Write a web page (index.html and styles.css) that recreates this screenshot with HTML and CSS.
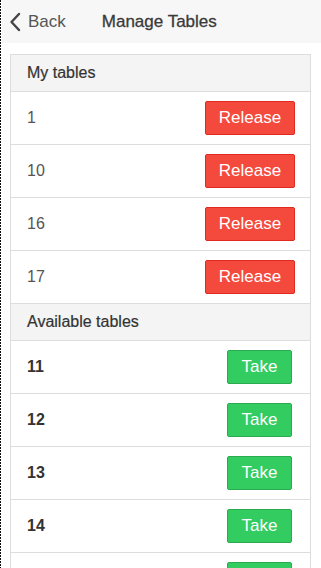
FILE: index.html
```html
<html>
<head>
  <title>Manage Tables</title>
  <link rel="stylesheet" href="styles.css">
</head>
<body>
  <div class="edge"></div>
  <header class="topbar">
    <a class="back" href="#">
      <svg class="chevron" width="12" height="20" viewBox="0 0 12 20">
        <path d="M10 2 L2.5 10 L10 18" fill="none" stroke="#444" stroke-width="2.4" stroke-linecap="round" stroke-linejoin="round"/>
      </svg>
      Back
    </a>
    <h1>Manage Tables</h1>
  </header>

  <div class="panel">
    <div class="panel-heading">My tables</div>
    <div class="row"><span class="num">1</span><button class="btn release">Release</button></div>
    <div class="row"><span class="num">10</span><button class="btn release">Release</button></div>
    <div class="row"><span class="num">16</span><button class="btn release">Release</button></div>
    <div class="row"><span class="num">17</span><button class="btn release">Release</button></div>

    <div class="panel-heading">Available tables</div>
    <div class="row"><span class="num bold">11</span><button class="btn take">Take</button></div>
    <div class="row"><span class="num bold">12</span><button class="btn take">Take</button></div>
    <div class="row"><span class="num bold">13</span><button class="btn take">Take</button></div>
    <div class="row"><span class="num bold">14</span><button class="btn take">Take</button></div>
    <div class="row"><span class="num bold">15</span><button class="btn take">Take</button></div>
  </div>
</body>
</html>
```

FILE: styles.css
```css
body {
  font-family: "Liberation Sans", Arial, sans-serif;
  margin: 0;
  padding: 0 0 0 2px;
  background-color: white;
  color: #333;
  overflow: hidden;
}
.edge {
  position: fixed;
  left: 0;
  top: 0;
  bottom: 0;
  width: 1px;
  background: repeating-linear-gradient(to bottom, #111 0, #111 2px, transparent 2px, transparent 3px);
}
.topbar {
  background-color: #f7f7f7;
  height: 43px;
  display: flex;
  align-items: center;
}
.back {
  display: flex;
  align-items: center;
  color: #555;
  text-decoration: none;
  font-size: 17px;
  margin-left: 7px;
}
.chevron {
  margin-right: 7px;
}
.topbar h1 {
  font-size: 17px;
  font-weight: normal;
  color: #3a3a3a;
  margin: 0 0 0 36px;
  -webkit-text-stroke: 0.3px #3a3a3a;
}
.panel {
  margin: 11px 10px 0 8px;
  border: 1px solid #ddd;
  border-bottom: none;
}
.panel-heading {
  background-color: #f4f4f4;
  height: 36px;
  line-height: 36px;
  padding-left: 16px;
  font-size: 16px;
  color: #333;
  border-bottom: 1px solid #ddd;
  -webkit-text-stroke: 0.2px #333;
}
.row {
  height: 52px;
  border-bottom: 1px solid #ddd;
  display: flex;
  align-items: center;
  justify-content: space-between;
  padding-left: 16px;
}
.num {
  font-size: 16px;
  color: #555;
}
.num.bold {
  font-weight: bold;
  color: #333;
}
.btn {
  font-family: "Liberation Sans", Arial, sans-serif;
  font-size: 17px;
  color: white;
  height: 34px;
  border-radius: 2px;
  cursor: pointer;
}
.release {
  background-color: #f44a3e;
  border: 1px solid #e2291d;
  width: 90px;
  margin-right: 15px;
}
.take {
  background-color: #33cc60;
  border: 1px solid #2caa50;
  width: 65px;
  margin-right: 18px;
}
```
